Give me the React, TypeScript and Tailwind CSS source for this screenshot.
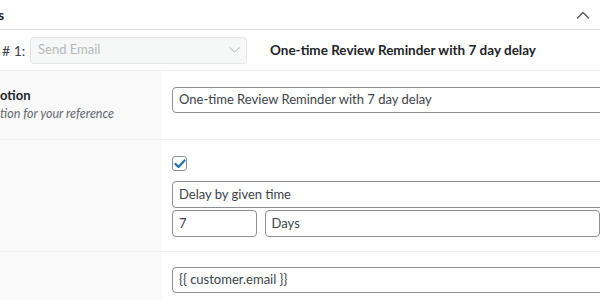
import React from "react";

const font = { fontFamily: 'Lato, "Open Sans", sans-serif' };

function ChevronDown({ className }: { className?: string }) {
  return (
    <svg width="11" height="6" viewBox="0 0 11 6" className={className} fill="none">
      <polyline points="0.5,0.5 5.5,5 10.5,0.5" stroke="currentColor" strokeWidth="1" />
    </svg>
  );
}

function CheckedBox() {
  return (
    <div className="w-[15px] h-[15px] rounded-[3px] border border-[#8c8f94] bg-white flex items-center justify-center">
      <svg width="12" height="10" viewBox="0 0 12 10" fill="none">
        <polyline points="1.5,5 4.5,8 10.5,1.5" stroke="#2271b1" strokeWidth="2.2" strokeLinecap="round" strokeLinejoin="round" />
      </svg>
    </div>
  );
}

export default function App() {
  return (
    <div className="w-[600px] h-[300px] overflow-hidden bg-white text-[#3c434a]" style={font}>
      {/* panel header */}
      <div className="h-[30px] flex items-center justify-between border-b border-[#dcdcde] overflow-hidden">
        <span className="text-[14px] font-bold text-[#1d2327] -ml-[2px]">s</span>
        <svg width="14" height="8" viewBox="0 0 14 8" className="mr-[10px] text-[#50575e]" fill="none">
          <polyline points="1,7.5 7,1.5 13,7.5" stroke="currentColor" strokeWidth="1.4" />
        </svg>
      </div>

      {/* action row */}
      <div className="h-[41px] flex items-center border-b border-[#f0f0f1]">
        <span className="text-[14px] pl-[2px] w-[30px] whitespace-nowrap">#&nbsp;1:</span>
        <div className="w-[217px] h-[27px] rounded-[4px] border border-[#e2e4e7] bg-[#f6f7f7] flex items-center justify-between pl-[7px] pr-[6px]">
          <span className="text-[13px] text-[#b5b8bb]">Send Email</span>
          <ChevronDown className="text-[#b5b8bb]" />
        </div>
        <span className="ml-[23px] text-[13.5px] font-bold text-[#1d2327] whitespace-nowrap">
          One-time Review Reminder with 7 day delay
        </span>
      </div>

      {/* description row */}
      <div className="flex border-b border-[#f0f0f1]">
        <div className="w-[162px] shrink-0 bg-[#f9f9f9] overflow-hidden pt-[15px]">
          <div className="text-[13px] font-bold text-[#1d2327] whitespace-nowrap leading-[18px]">otion</div>
          <div className="text-[12.5px] italic text-[#646970] whitespace-nowrap leading-[18px] mt-[1px]">tion for your reference</div>
        </div>
        <div className="flex-1 pl-[10px] pt-[16px] pb-[26px] overflow-hidden">
          <div className="w-[460px] h-[26px] rounded-[4px] border border-[#8c8f94] bg-white flex items-center px-[6px] text-[13px] whitespace-nowrap">
            One-time Review Reminder with 7 day delay
          </div>
        </div>
      </div>

      {/* timing row */}
      <div className="flex border-b border-[#f0f0f1]">
        <div className="w-[162px] shrink-0 bg-[#f9f9f9]" />
        <div className="flex-1 pl-[10px] pt-[16px] pb-[14px] overflow-hidden">
          <CheckedBox />
          <div className="mt-[10px] w-[460px] h-[27px] rounded-[4px] border border-[#8c8f94] bg-white flex items-center px-[6px] text-[13px] whitespace-nowrap">
            Delay by given time
          </div>
          <div className="mt-[2px] flex gap-[8px]">
            <div className="w-[90px] h-[27px] rounded-[4px] border border-[#8c8f94] bg-white flex items-center px-[6px] text-[13px]">
              7
            </div>
            <div className="w-[360px] h-[27px] rounded-[4px] border border-[#8c8f94] bg-white flex items-center px-[6px] text-[13px]">
              Days
            </div>
          </div>
        </div>
      </div>

      {/* recipient row */}
      <div className="flex">
        <div className="w-[162px] shrink-0 bg-[#f9f9f9] h-[60px]" />
        <div className="flex-1 pl-[10px] pt-[15px] overflow-hidden">
          <div className="w-[460px] h-[26px] rounded-[4px] border border-[#8c8f94] bg-white flex items-center px-[6px] text-[13px] whitespace-nowrap">
            {"{{ customer.email }}"}
          </div>
        </div>
      </div>
    </div>
  );
}
